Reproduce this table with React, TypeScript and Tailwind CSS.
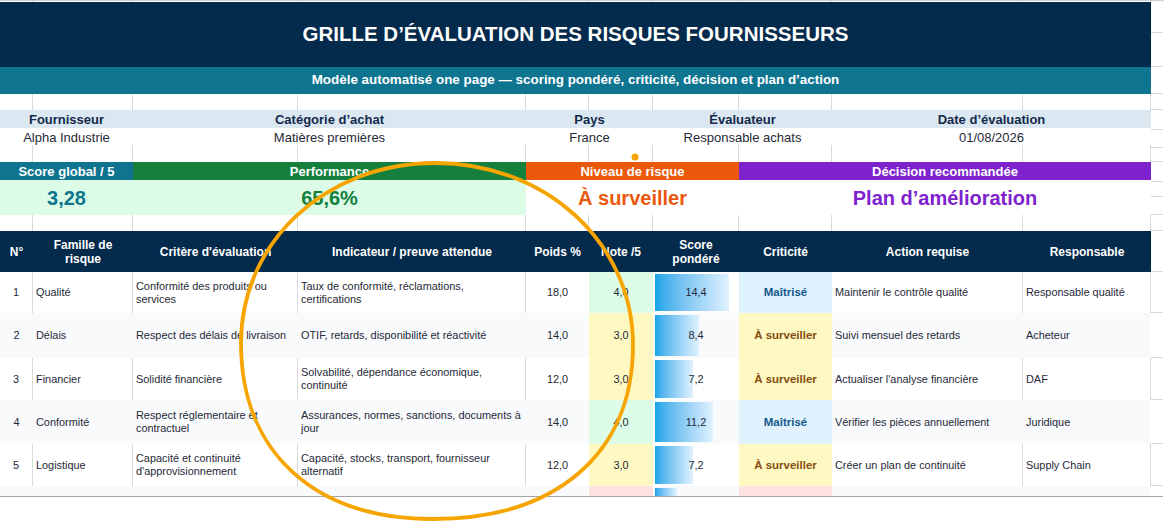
import React from "react";

const COLS = "grid grid-cols-[33px_100px_165px_228px_63px_64px_86px_93px_191px_128px_12px]";
const LINE = "border-r border-[#d9d9d9]";
const EXTRA = "border-b border-[#d9d9d9]";

type Risk = {
  n: number;
  famille: string;
  critere: string;
  indicateur: string;
  poids: number;
  note: number;
  crit: "Maîtrisé" | "À surveiller" | "Critique";
  action: string;
  resp: string;
  h: string;
};

const risks: Risk[] = [
  {
    n: 1,
    famille: "Qualité",
    critere: "Conformité des produits ou services",
    indicateur: "Taux de conformité, réclamations, certifications",
    poids: 18,
    note: 4,
    crit: "Maîtrisé",
    action: "Maintenir le contrôle qualité",
    resp: "Responsable qualité",
    h: "h-[41px]",
  },
  {
    n: 2,
    famille: "Délais",
    critere: "Respect des délais de livraison",
    indicateur: "OTIF, retards, disponibilité et réactivité",
    poids: 14,
    note: 3,
    crit: "À surveiller",
    action: "Suivi mensuel des retards",
    resp: "Acheteur",
    h: "h-[45px]",
  },
  {
    n: 3,
    famille: "Financier",
    critere: "Solidité financière",
    indicateur: "Solvabilité, dépendance économique, continuité",
    poids: 12,
    note: 3,
    crit: "À surveiller",
    action: "Actualiser l'analyse financière",
    resp: "DAF",
    h: "h-[42px]",
  },
  {
    n: 4,
    famille: "Conformité",
    critere: "Respect réglementaire et contractuel",
    indicateur: "Assurances, normes, sanctions, documents à jour",
    poids: 14,
    note: 4,
    crit: "Maîtrisé",
    action: "Vérifier les pièces annuellement",
    resp: "Juridique",
    h: "h-[44px]",
  },
  {
    n: 5,
    famille: "Logistique",
    critere: "Capacité et continuité d'approvisionnement",
    indicateur: "Capacité, stocks, transport, fournisseur alternatif",
    poids: 12,
    note: 3,
    crit: "À surveiller",
    action: "Créer un plan de continuité",
    resp: "Supply Chain",
    h: "h-[42px]",
  },
  {
    n: 6,
    famille: "RSE",
    critere: "Engagement éthique et environnemental",
    indicateur: "Politique RSE, bilan carbone, droits humains, éthique",
    poids: 10,
    note: 2,
    crit: "Critique",
    action: "Exiger un plan d'action RSE",
    resp: "Achats",
    h: "h-[43px]",
  },
];

const fmt = (v: number) => v.toFixed(1).replace(".", ",");

const noteBg = (n: number) => (n >= 4 ? "bg-[#dcfce7]" : n >= 3 ? "bg-[#fef9c3]" : "bg-[#fee2e2]");

const critStyle: Record<Risk["crit"], string> = {
  "Maîtrisé": "bg-[#e0f2fe] text-[#15598a]",
  "À surveiller": "bg-[#fef9c3] text-[#854d0e]",
  Critique: "bg-[#fee2e2] text-[#b91c1c]",
};

function Spacer({ h }: { h: string }) {
  return (
    <div className={`${COLS} ${h}`}>
      {Array.from({ length: 10 }, (_, i) => (
        <div key={i} className={LINE} />
      ))}
      <div className={EXTRA} />
    </div>
  );
}

function DataRow({ r, striped }: { r: Risk; striped: boolean }) {
  const score = (r.poids * r.note) / 5;
  const bg = striped ? "bg-[#f8fafc]" : "bg-white";
  const line = striped ? "" : LINE;
  return (
    <div className={`${COLS} ${r.h} text-[10.9px] leading-[13px] text-[#1f2937]`}>
      <div className={`flex items-center justify-center ${bg} ${line}`}>{r.n}</div>
      <div className={`flex items-center pl-[3px] ${bg} ${line}`}>{r.famille}</div>
      <div className={`flex items-center pl-[3px] pr-[1px] ${bg} ${line}`}>{r.critere}</div>
      <div className={`flex items-center pl-[3px] pr-[1px] ${bg} ${line}`}>{r.indicateur}</div>
      <div className={`flex items-center justify-center ${bg}`}>{fmt(r.poids)}</div>
      <div className={`flex items-center justify-center ${noteBg(r.note)}`}>{fmt(r.note)}</div>
      <div className={`grid p-[2px] ${bg}`}>
        <div
          className="[grid-area:1/1] h-full bg-linear-to-r from-[#0ea5e9] to-[#e0f2fe]"
          style={{ width: 2 + score * 5 }}
        />
        <div className="[grid-area:1/1] flex items-center justify-center">{fmt(score)}</div>
      </div>
      <div className={`flex items-center justify-center text-[11.5px] font-bold ${critStyle[r.crit]}`}>{r.crit}</div>
      <div className={`flex items-center pl-[3px] ${bg} ${line}`}>{r.action}</div>
      <div className={`flex items-center pl-[3px] ${bg} ${line}`}>{r.resp}</div>
      <div className={EXTRA} />
    </div>
  );
}

const infos = [
  { label: "Fournisseur", value: "Alpha Industrie" },
  { label: "Catégorie d’achat", value: "Matières premières" },
  { label: "Pays", value: "France" },
  { label: "Évaluateur", value: "Responsable achats" },
  { label: "Date d’évaluation", value: "01/08/2026" },
];

const headers = [
  "N°",
  "Famille de risque",
  "Critère d'évaluation",
  "Indicateur / preuve attendue",
  "Poids %",
  "Note /5",
  "Score pondéré",
  "Criticité",
  "Action requise",
  "Responsable",
];

export default function App() {
  return (
    <div className="relative w-[1163px] h-[522px] overflow-hidden bg-white font-['Liberation_Sans',Arial,sans-serif]">
      <div className={`${COLS} h-[2px] border-t border-[#cfcfcf]`}>
        {Array.from({ length: 11 }, (_, i) => (
          <div key={i} className={LINE} />
        ))}
      </div>

      <div className={`${COLS} h-[65px]`}>
        <div className="col-span-10 flex items-center justify-center bg-[#042a4c] text-[20.5px] font-bold text-white">
          GRILLE D’ÉVALUATION DES RISQUES FOURNISSEURS
        </div>
        <div className="flex flex-col">
          <div className={`h-[31px] ${EXTRA}`} />
          <div className={`flex-1 ${EXTRA}`} />
        </div>
      </div>

      <div className={`${COLS} h-[27px]`}>
        <div className="col-span-10 flex items-center justify-center bg-[#0e7490] text-[13.4px] font-bold text-white">
          Modèle automatisé one page — scoring pondéré, criticité, décision et plan d’action
        </div>
        <div className={EXTRA} />
      </div>

      <Spacer h="h-[16px]" />

      <div className={`${COLS} h-[18px]`}>
        {infos.map((i) => (
          <div
            key={i.label}
            className="col-span-2 flex items-center justify-center bg-[#dbe8f2] text-[13px] font-bold text-[#13294b]"
          >
            {i.label}
          </div>
        ))}
        <div className={EXTRA} />
      </div>
      <div className={`${COLS} h-[17px]`}>
        {infos.map((i) => (
          <div key={i.label} className="col-span-2 flex items-center justify-center bg-white text-[13px] text-[#1f2937]">
            {i.value}
          </div>
        ))}
        <div className={EXTRA} />
      </div>

      <Spacer h="h-[17px]" />

      <div className={`${COLS} h-[18px] text-[13px] font-bold text-white`}>
        <div className="col-span-2 flex items-center justify-center bg-[#0e7490]">Score global / 5</div>
        <div className="col-span-2 flex items-center justify-center bg-[#15803d]">Performance</div>
        <div className="col-span-3 flex items-center justify-center bg-[#ea580c]">Niveau de risque</div>
        <div className="col-span-3 flex items-center justify-center bg-[#7e22ce]">Décision recommandée</div>
        <div className={EXTRA} />
      </div>
      <div className={`${COLS} h-[35px] text-[20px] font-bold`}>
        <div className="col-span-2 flex items-center justify-center bg-[#dcfce7] text-[#0e7490]">3,28</div>
        <div className="col-span-2 flex items-center justify-center bg-[#dcfce7] text-[#15803d]">65,6%</div>
        <div className="col-span-3 flex items-center justify-center bg-white text-[#ea580c]">À surveiller</div>
        <div className="col-span-3 flex items-center justify-center bg-white text-[#7e22ce]">Plan d’amélioration</div>
        <div className="flex flex-col">
          <div className={`h-[17px] ${EXTRA}`} />
          <div className={`flex-1 ${EXTRA}`} />
        </div>
      </div>

      <Spacer h="h-[16px]" />

      <div className={`${COLS} h-[41px] text-[12px] font-bold leading-[14px] text-white`}>
        {headers.map((h) => (
          <div key={h} className="flex items-center justify-center bg-[#042a4c] px-1 text-center">
            {h}
          </div>
        ))}
        <div className={EXTRA} />
      </div>

      {risks.slice(0, 5).map((r, i) => (
        <DataRow key={r.n} r={r} striped={i % 2 === 1} />
      ))}
      <div className="h-[10px] overflow-hidden">
        <DataRow r={risks[5]} striped />
      </div>
      <div className="h-px bg-[#a3a3a3]" />

      <svg className="pointer-events-none absolute inset-0" width="1163" height="522" viewBox="0 0 1163 522">
        <path
          d="M435 163 C546 163 633 243 633 345 C633 453 557 519 433 519 C314 519 241 452 241 343 C241 242 326 163 435 163 Z"
          fill="none"
          stroke="#f6a500"
          strokeWidth="3.8"
        />
        <circle cx="635" cy="157" r="3.5" fill="#f6a500" />
      </svg>
    </div>
  );
}
